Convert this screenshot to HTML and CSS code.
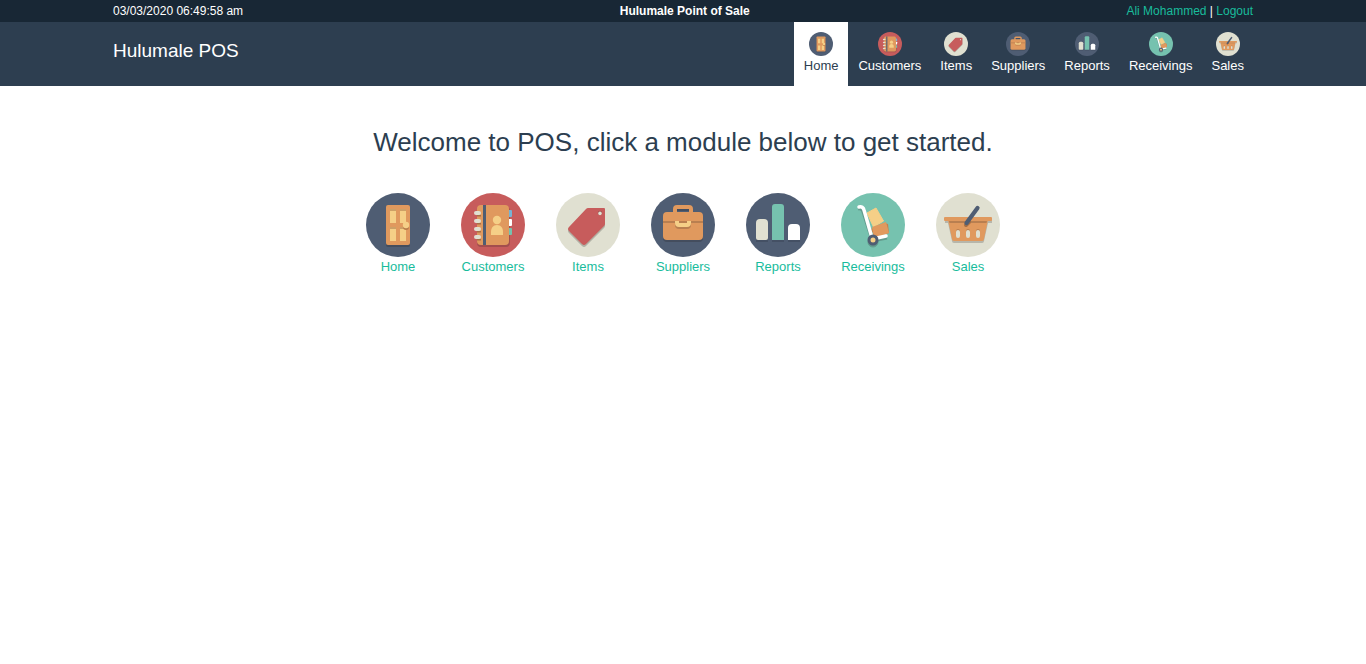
FILE: index.html
```html
<!DOCTYPE html>
<html lang="en">
<head>
<meta charset="utf-8">
<title>Hulumale Point of Sale</title>
<link rel="stylesheet" href="styles.css">
</head>
<body>
<svg class="sprite" aria-hidden="true">
  <symbol id="home" viewBox="0 0 64 64">
    <circle cx="32" cy="32" r="32" fill="#4f5d73"/>
    <rect x="20" y="14" width="24" height="40" rx="2" fill="#231f20" opacity=".25"/>
    <rect x="20" y="12" width="24" height="40" rx="2" fill="#e0995e"/>
    <path d="M24 16h6v2h-6zM34 16h6v2h-6zM24 34h6v2h-6zM34 34h6v2h-6z" fill="#cda066"/>
    <path d="M24 18h6v12h-6zM34 18h6v12h-6zM24 36h6v12h-6zM34 36h6v12h-6z" fill="#f5cf87"/>
    <circle cx="40" cy="34" r="3" fill="#b87c4b"/>
    <circle cx="40" cy="32" r="3.2" fill="#f5cf87"/>
  </symbol>
  <symbol id="customers" viewBox="0 0 64 64">
    <circle cx="32" cy="32" r="32" fill="#c75c5c"/>
    <rect x="16" y="14" width="33" height="40" rx="4" fill="#231f20" opacity=".22"/>
    <rect x="46" y="17" width="5" height="7" rx="1" fill="#77b3d4"/>
    <rect x="46" y="26" width="5" height="7" rx="1" fill="#fff"/>
    <rect x="46" y="35" width="5" height="7" rx="1" fill="#76c2af"/>
    <rect x="16" y="12" width="32" height="40" rx="4" fill="#e0995e"/>
    <path d="M22 12h3v40h-3z" fill="#4f5d73"/>
    <path d="M16 22h4v1.600h-4zM16 30h4v1.600h-4zM16 38h4v1.600h-4zM16 46h4v1.600h-4z" fill="#a66f45"/>
    <g fill="#e0e0d1"><rect x="13" y="18" width="7" height="4" rx="2"/><rect x="13" y="26" width="7" height="4" rx="2"/><rect x="13" y="34" width="7" height="4" rx="2"/><rect x="13" y="42" width="7" height="4" rx="2"/></g>
    <circle cx="36" cy="27" r="4.200" fill="#f5cf87"/>
    <path d="M30 42v-3c0-4 2-7 6-7s6 3 6 7v3z" fill="#f5cf87"/>
  </symbol>
  <symbol id="items" viewBox="0 0 64 64">
    <circle cx="32" cy="32" r="32" fill="#e0e0d1"/>
    <path d="M32 17h16q1 0 1 1v15q0 1-1 2L30 53q-2 2-4 0L13 40q-2-2 0-4L30 18q1-1 2-1z" fill="#231f20" opacity=".25"/>
    <path d="M32 15h16q1 0 1 1v15q0 1-1 2L30 51q-2 2-4 0L13 38q-2-2 0-4L30 16q1-1 2-1z" fill="#c75c5c"/>
    <circle cx="44" cy="20" r="2.200" fill="#9b4c4c"/>
    <circle cx="44" cy="20.400" r="1.800" fill="#e0e0d1"/>
  </symbol>
  <symbol id="suppliers" viewBox="0 0 64 64">
    <circle cx="32" cy="32" r="32" fill="#4f5d73"/>
    <rect x="12" y="21" width="40" height="28" rx="4" fill="#231f20" opacity=".25"/>
    <path d="M24 21v-5q0-2 2-2h12q2 0 2 2v5" fill="none" stroke="#e0995e" stroke-width="4"/>
    <path d="M26 16h12v2h-12z" fill="#414d60"/>
    <rect x="12" y="19" width="40" height="28" rx="4" fill="#e0995e"/>
    <path d="M12 28h40v2h-40z" fill="#b97f50"/>
    <path d="M24 30h16v2q0 4-4 4h-8q-4 0-4-4z" fill="#b97f50"/>
    <path d="M24 28h4v2h8v-2h4v2q0 4-4 4h-8q-4 0-4-4z" fill="#f5cf87"/>
  </symbol>
  <symbol id="reports" viewBox="0 0 64 64">
    <circle cx="32" cy="32" r="32" fill="#4f5d73"/>
    <path d="M10 44h12v5h-12zM26 44h12v5h-12zM42 44h12v5h-12z" fill="#445064"/>
    <path d="M10 45V30q0-4 4-4h4q4 0 4 4v15q0 2-2 2h-8q-2 0-2-2z" fill="#e0e0d1"/>
    <path d="M26 47V14q0-3 3-3h6q3 0 3 3v33z" fill="#76c2af"/>
    <path d="M42 47V35q0-4 4-4h4q4 0 4 4v12z" fill="#fff"/>
  </symbol>
  <symbol id="receivings" viewBox="0 0 64 64">
    <circle cx="32" cy="32" r="32" fill="#76c2af"/>
    <g opacity=".23" fill="#231f20" stroke="#231f20"><path d="M17 16q4-1 5 3l8 25M36 47l10-2" fill="none" stroke-width="3"/><circle cx="32" cy="49" r="5"/></g>
    <path d="M26 20l9-5 7.500 13-10 6z" fill="#f5cf87" stroke="#f5cf87" stroke-linejoin="round"/>
    <path d="M30 36l13-6 4 1 1 9-14 5z" fill="#c2814f"/>
    <path d="M31 34l14-5 3 11-15 5z" fill="#e0995e"/>
    <path d="M18 14q4-1 5 3l8 28M36 45l9-2" fill="none" stroke="#fff" stroke-width="3.500" stroke-linecap="round"/>
    <circle cx="32" cy="47" r="4" fill="#f5cf87" stroke="#4f5d73" stroke-width="3"/>
  </symbol>
  <symbol id="sales" viewBox="0 0 64 64">
    <circle cx="32" cy="32" r="32" fill="#e0e0d1"/>
    <path d="M9 27h47v3h-4l-4 18q0 2-2 2H18q-2 0-2-2l-4-18H9z" fill="#231f20" opacity=".22"/>
    <path d="M12 27h40l-4 19q0 2-2 2H18q-2 0-2-2z" fill="#e0995e"/>
    <path d="M13 28h38l-.5 2h-37z" fill="#b97f50"/>
    <rect x="8" y="24" width="48" height="4" rx="1" fill="#e0995e"/>
    <g fill="#b97f50"><rect x="20" y="36" width="4" height="8" rx="2"/><rect x="30" y="36" width="4" height="8" rx="2"/><rect x="40" y="36" width="4" height="8" rx="2"/></g>
    <g fill="#e0e0d1"><rect x="20" y="37" width="4" height="8" rx="2"/><rect x="30" y="37" width="4" height="8" rx="2"/><rect x="40" y="37" width="4" height="8" rx="2"/></g>
    <path d="M30 32l3-3" stroke="#a66f45" stroke-width="4" stroke-linecap="round"/>
    <path d="M30.500 30L41.500 15" stroke="#4f5d73" stroke-width="4.200" stroke-linecap="round"/>
  </symbol>
</svg>

<div class="topbar">
  <div class="container topbar-row">
    <span class="clock">03/03/2020 06:49:58 am</span>
    <strong class="company">Hulumale Point of Sale</strong>
    <span class="account"><a href="#profile">Ali Mohammed</a> | <a href="#logout">Logout</a></span>
  </div>
</div>

<header class="navbar">
  <div class="container navbar-row">
    <a class="brand" href="#top">Hulumale POS</a>
    <nav class="menu">
      <a class="menu-item active" href="#home"><svg class="menu-icon"><use href="#home"/></svg>Home</a>
      <a class="menu-item" href="#customers"><svg class="menu-icon"><use href="#customers"/></svg>Customers</a>
      <a class="menu-item" href="#items"><svg class="menu-icon"><use href="#items"/></svg>Items</a>
      <a class="menu-item" href="#suppliers"><svg class="menu-icon"><use href="#suppliers"/></svg>Suppliers</a>
      <a class="menu-item" href="#reports"><svg class="menu-icon"><use href="#reports"/></svg>Reports</a>
      <a class="menu-item" href="#receivings"><svg class="menu-icon"><use href="#receivings"/></svg>Receivings</a>
      <a class="menu-item" href="#sales"><svg class="menu-icon"><use href="#sales"/></svg>Sales</a>
    </nav>
  </div>
</header>

<main class="container">
  <h1 class="welcome">Welcome to POS, click a module below to get started.</h1>
  <div class="modules">
    <a class="module" href="#home"><svg class="module-icon"><use href="#home"/></svg>Home</a>
    <a class="module" href="#customers"><svg class="module-icon"><use href="#customers"/></svg>Customers</a>
    <a class="module" href="#items"><svg class="module-icon"><use href="#items"/></svg>Items</a>
    <a class="module" href="#suppliers"><svg class="module-icon"><use href="#suppliers"/></svg>Suppliers</a>
    <a class="module" href="#reports"><svg class="module-icon"><use href="#reports"/></svg>Reports</a>
    <a class="module" href="#receivings"><svg class="module-icon"><use href="#receivings"/></svg>Receivings</a>
    <a class="module" href="#sales"><svg class="module-icon"><use href="#sales"/></svg>Sales</a>
  </div>
</main>
</body>
</html>
```

FILE: styles.css
```css
* {
  box-sizing: border-box;
}

body {
  margin: 0;
  background: #fff;
  color: #2c3e50;
  font-family: "Liberation Sans", Arial, sans-serif;
  font-size: 13px;
  line-height: 20px;
}

a {
  color: #18bc9c;
  text-decoration: none;
}

.sprite {
  display: none;
}

.container {
  max-width: 1140px;
  margin: 0 auto;
}

.topbar {
  background: #182735;
  color: #fff;
  font-size: 12px;
  line-height: 18px;
}

.topbar-row {
  display: flex;
  justify-content: space-between;
  padding: 2px 0;
}

.navbar {
  background: #2d3e50;
}

.navbar-row {
  display: flex;
  justify-content: space-between;
}

.brand {
  padding: 19px 0;
  color: #fff;
  font-size: 19px;
  line-height: 20px;
}

.menu {
  display: flex;
  gap: 1px;
}

.menu-item {
  display: flex;
  flex-direction: column;
  align-items: center;
  padding: 10px 9px;
  color: #fff;
}

.menu-item.active {
  padding: 10px;
  background: #fff;
  color: #2c3e50;
}

.menu-icon {
  width: 24px;
  height: 24px;
}

.welcome {
  margin: 42px 0 37px;
  font-size: 26px;
  font-weight: 400;
  line-height: 28px;
  text-align: center;
}

.modules {
  display: flex;
  flex-wrap: wrap;
  justify-content: center;
}

.module {
  display: flex;
  flex-direction: column;
  align-items: center;
  width: 95px;
}

.module-icon {
  width: 64px;
  height: 64px;
}
```
